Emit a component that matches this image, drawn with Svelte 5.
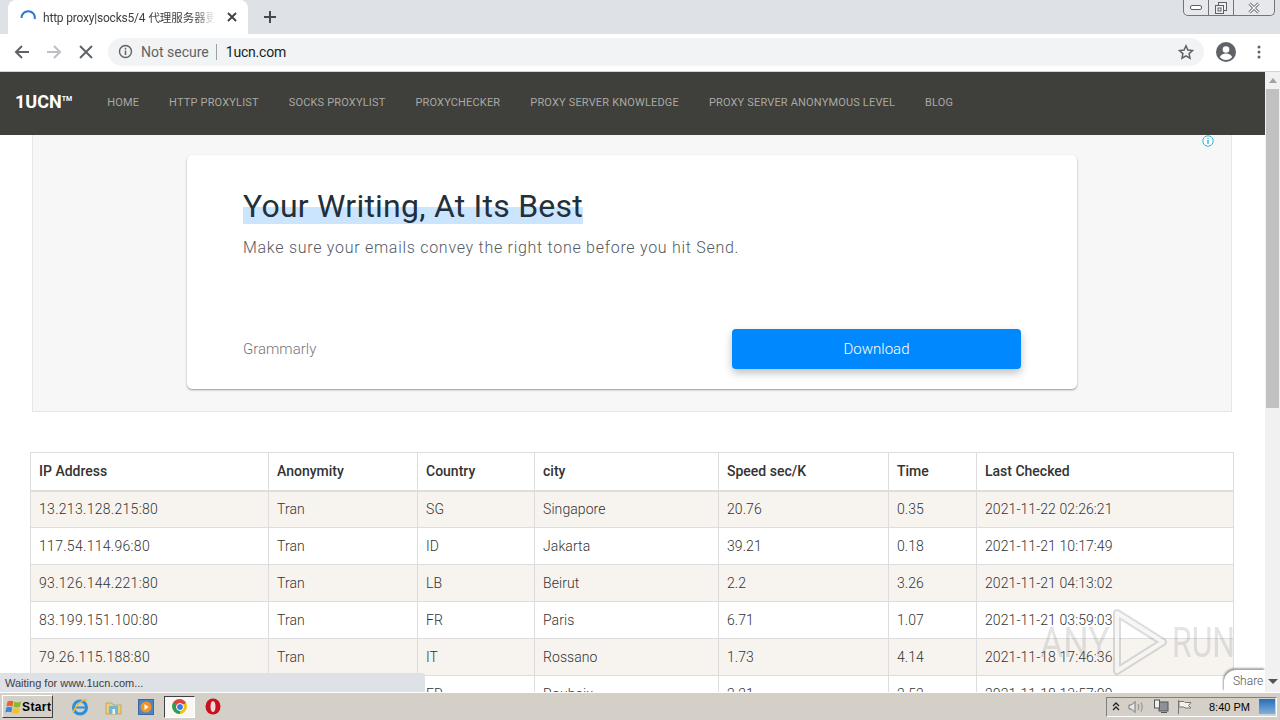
<script>
  const navItems = [
    "Home",
    "HTTP Proxylist",
    "SOCKS Proxylist",
    "ProxyChecker",
    "Proxy Server Knowledge",
    "Proxy Server Anonymous Level",
    "Blog",
  ];

  const rows = [
    ["13.213.128.215:80", "Tran", "SG", "Singapore", "20.76", "0.35", "2021-11-22 02:26:21"],
    ["117.54.114.96:80", "Tran", "ID", "Jakarta", "39.21", "0.18", "2021-11-21 10:17:49"],
    ["93.126.144.221:80", "Tran", "LB", "Beirut", "2.2", "3.26", "2021-11-21 04:13:02"],
    ["83.199.151.100:80", "Tran", "FR", "Paris", "6.71", "1.07", "2021-11-21 03:59:03"],
    ["79.26.115.188:80", "Tran", "IT", "Rossano", "1.73", "4.14", "2021-11-18 17:46:36"],
    ["90.63.218.232:80", "Tran", "FR", "Roubaix", "2.21", "2.52", "2021-11-18 13:57:09"],
  ];

  const headers = ["IP Address", "Anonymity", "Country", "city", "Speed sec/K", "Time", "Last Checked"];
</script>

<div class="screen">
  <header class="chrome">
    <div class="tabstrip">
      <div class="tab">
        <svg class="spinner" width="18" height="18" viewBox="0 0 18 18"><path d="M2.500 10A6.700 6.700 0 1 1 15.800 11" fill="none" stroke="#2a78d6" stroke-width="2"/></svg>
        <span class="tab-title"><span class="latin">http proxy|socks5/4</span> <span class="cjk">代理服务器更新</span></span>
        <svg class="tab-close" width="10" height="10" viewBox="0 0 10 10"><path d="M1 1l8 8M9 1l-8 8" stroke="#3c4043" stroke-width="1.800"/></svg>
      </div>
      <svg class="new-tab" width="14" height="14" viewBox="0 0 14 14"><path d="M7 1v12M1 7h12" stroke="#45484c" stroke-width="2"/></svg>
      <div class="win-buttons">
        <span class="win-btn"><svg width="14" height="8" viewBox="0 0 14 8"><rect x="1.500" y="1.500" width="11" height="4" rx="1.500" fill="#fff" stroke="#5c6168"/></svg></span>
        <span class="win-btn"><svg width="14" height="14" viewBox="0 0 14 14"><rect x="4.500" y="1.500" width="8" height="8" fill="#eef0f3" stroke="#5c6168"/><rect x="1.500" y="4.500" width="8" height="8" fill="#eef0f3" stroke="#5c6168"/><rect x="4" y="7" width="3" height="3" fill="none" stroke="#5c6168"/></svg></span>
        <span class="win-btn close"><svg width="14" height="12" viewBox="0 0 14 12"><path d="M2.500 1.500l9 9M11.500 1.500l-9 9" stroke="#5c6168" stroke-width="3"/><path d="M2.500 1.500l9 9M11.500 1.500l-9 9" stroke="#fff" stroke-width="1.200"/></svg></span>
      </div>
    </div>
    <div class="toolbar">
      <svg class="tool" width="16" height="16" viewBox="0 0 16 16"><path d="M15 8H2.500M8 2L2 8l6 6" fill="none" stroke="#5f6368" stroke-width="2"/></svg>
      <svg class="tool" width="16" height="16" viewBox="0 0 16 16"><path d="M1 8h12.500M8 2l6 6-6 6" fill="none" stroke="#bdc1c6" stroke-width="2"/></svg>
      <svg class="tool stop" width="14" height="14" viewBox="0 0 14 14"><path d="M1 1l12 12M13 1L1 13" stroke="#5f6368" stroke-width="2"/></svg>
      <div class="omnibox">
        <svg width="15" height="15" viewBox="0 0 15 15"><circle cx="7.500" cy="7.500" r="6" fill="none" stroke="#5f6368" stroke-width="1.400"/><path d="M7.500 6.500v4.500M7.500 3.800v1.600" stroke="#5f6368" stroke-width="1.500"/></svg>
        <span class="not-secure">Not secure</span>
        <span class="divider"></span>
        <span class="url">1ucn.com</span>
        <svg class="star" width="16" height="16" viewBox="0 0 16 16"><path d="M8 1.800l1.900 4.200 4.600.5-3.400 3.100.9 4.600L8 11.900l-4 2.300.9-4.600L1.500 6.500l4.600-.5z" fill="none" stroke="#5f6368" stroke-width="1.500"/></svg>
      </div>
      <svg class="avatar" width="20" height="20" viewBox="0 0 20 20"><circle cx="10" cy="10" r="10" fill="#5f6368"/><circle cx="10" cy="7.500" r="3.300" fill="#fff"/><path d="M3.800 15c1.500-2.600 3.800-3.400 6.200-3.400s4.700.8 6.200 3.400c-1.500 1.800-3.700 3-6.200 3s-4.700-1.200-6.200-3z" fill="#fff"/></svg>
      <svg class="menu" width="4" height="14" viewBox="0 0 4 14"><circle cx="2" cy="2" r="1.500" fill="#5f6368"/><circle cx="2" cy="7" r="1.500" fill="#5f6368"/><circle cx="2" cy="12" r="1.500" fill="#5f6368"/></svg>
    </div>
  </header>

  <div class="viewport">
    <main class="page">
      <nav class="navbar">
        <span class="brand">1UCN<sup>TM</sup></span>
        {#each navItems as item}
          <span class="nav-link">{item}</span>
        {/each}
      </nav>

      <section class="ad">
        <svg class="ad-info" width="12" height="12" viewBox="0 0 12 12"><circle cx="6" cy="6" r="5.200" fill="#fff" stroke="#2bb8d4"/><path d="M6 5v4M6 2.800v1.200" stroke="#2bb8d4" stroke-width="1.400"/></svg>
        <div class="ad-card">
          <h1><span>Your Writing, At Its Best</span></h1>
          <p>Make sure your emails convey the right tone before you hit Send.</p>
          <div class="ad-foot">
            <span class="advertiser">Grammarly</span>
            <span class="download">Download</span>
          </div>
        </div>
      </section>

      <table>
        <colgroup>
          <col style="width:238px" /><col style="width:149px" /><col style="width:117px" /><col style="width:184px" /><col style="width:170px" /><col style="width:88px" /><col />
        </colgroup>
        <thead>
          <tr>
            {#each headers as h}<th>{h}</th>{/each}
          </tr>
        </thead>
        <tbody>
          {#each rows as row}
            <tr>
              {#each row as cell}<td>{cell}</td>{/each}
            </tr>
          {/each}
        </tbody>
      </table>

      <div class="status">Waiting for www.1ucn.com...</div>
      <div class="watermark">
        <span class="mark-any">ANY</span>
        <svg width="56" height="68" viewBox="0 0 56 68">
          <path d="M5 5l46 29L5 63z" fill="none" stroke="#8e8e8e" stroke-opacity=".3" stroke-width="8" stroke-linejoin="round"/>
          <path d="M5 5l46 29L5 63z" fill="none" stroke="#fff" stroke-opacity=".75" stroke-width="4" stroke-linejoin="round"/>
        </svg>
        <span class="mark-run">RUN</span>
      </div>
    </main>
    <aside class="scrollbar">
      <i class="arrow"></i>
      <div class="thumb"></div>
    </aside>
    <div class="share"><span class="share-tab">Share</span><i></i></div>
  </div>

  <footer class="taskbar">
    <div class="start">
      <svg width="17" height="16" viewBox="0 0 17 16"><path d="M2.500 2.500C4.500 1.500 6.500 1.500 8.500 2.500L7.500 7.500C5.500 6.500 3.500 6.500 1.500 7.500z" fill="#e8632a"/><path d="M9.500 2.800C11.500 3.800 13.500 3.800 16 2.500L15 7.800C13 8.800 10.500 8.800 8.500 7.800z" fill="#86b92f"/><path d="M1.300 8.500C3.300 7.500 5.300 7.500 7.300 8.500L6.300 13.500C4.300 12.500 2.300 12.500.3 13.500z" fill="#3b86d8"/><path d="M8.300 8.800C10.300 9.800 12.800 9.800 14.800 8.800L13.800 14C11.800 15 9.300 15 7.300 14z" fill="#f2c12e"/></svg>
      <span>Start</span>
    </div>
    <div class="quick">
      <svg width="18" height="18" viewBox="0 0 18 18"><circle cx="9" cy="9.500" r="6.500" fill="none" stroke="#2b8ed8" stroke-width="3"/><path d="M4 9.500h10" stroke="#2b8ed8" stroke-width="2"/><path d="M2 15C5 6 12 1 16 2" fill="none" stroke="#f0b93a" stroke-width="1.500"/></svg>
      <svg width="17" height="16" viewBox="0 0 17 16"><path d="M1 4h6l1 2h8v9H1z" fill="#e9cf7c" stroke="#b79a45" stroke-width=".7"/><rect x="4" y="7" width="9" height="8" fill="#6fb6dc"/><rect x="7.500" y="10" width="2.500" height="5" fill="#eef4ea"/></svg>
      <svg width="16" height="16" viewBox="0 0 16 16"><rect x=".5" y=".5" width="15" height="15" fill="#4e86c4" stroke="#38689f"/><circle cx="8" cy="8" r="5.500" fill="#f0932a"/><path d="M6.500 5l4 3-4 3z" fill="#fff"/></svg>
      <span class="active-app"><span class="chrome-logo"><span></span></span></span>
      <svg width="16" height="17" viewBox="0 0 16 17"><ellipse cx="8" cy="8.500" rx="7.500" ry="8" fill="#c7111e"/><ellipse cx="8" cy="8.500" rx="2.500" ry="5.500" fill="#f3d6d6"/></svg>
    </div>
    <div class="tray">
      <svg width="8" height="9" viewBox="0 0 8 9"><path d="M1 4l3-3 3 3M1 8l3-3 3 3" fill="none" stroke="#222" stroke-width="1.300"/></svg>
      <svg width="17" height="14" viewBox="0 0 17 14"><path d="M1 5h2.500L7 1.500v11L3.500 9H1z" fill="#e8e8e4" stroke="#777"/><path d="M10 4c1 2 1 4 0 6M13 2.500c1.500 3 1.500 6 0 9" fill="none" stroke="#888"/></svg>
      <svg width="16" height="15" viewBox="0 0 16 15"><rect x="6" y="3" width="9" height="9" fill="#8d9196" stroke="#555"/><rect x="1.500" y="1" width="5" height="8" fill="#eee" stroke="#555"/><path d="M8 13.500h6" stroke="#555"/></svg>
      <svg width="15" height="14" viewBox="0 0 15 14"><path d="M1.500 0v14" stroke="#777"/><path d="M2 1.500h5l1 1h6l-2.500 3 2.500 2.500H8l-1-1H2z" fill="#f3f2ec" stroke="#777"/></svg>
      <span class="clock">8:40 PM</span>
      <span class="show-desktop"></span>
    </div>
  </footer>
</div>

<style>
  :global(body) {
    overflow: hidden;
    background: #fff;
  }
  .screen {
    width: 1280px;
    height: 720px;
    display: flex;
    flex-direction: column;
    overflow: hidden;
    font-family: Roboto, "Noto Sans CJK SC", sans-serif;
  }

  /* browser frame */
  .chrome {
    flex: none;
    height: 72px;
    background: #fff;
    border-bottom: 1px solid #d4d5d7;
    box-sizing: border-box;
  }
  .tabstrip {
    height: 34px;
    background: #dee1e6;
    display: flex;
    align-items: flex-end;
    padding-left: 8px;
    position: relative;
  }
  .tab {
    width: 240px;
    height: 34px;
    box-sizing: border-box;
    background: #fff;
    border-radius: 8px 8px 0 0;
    display: flex;
    align-items: center;
    padding: 0 10px 0 11px;
    gap: 6px;
  }
  .tab-title {
    flex: 1;
    font-size: 12px;
    color: #3c4043;
    white-space: nowrap;
    overflow: hidden;
    mask-image: linear-gradient(90deg, #000 88%, transparent);
  }
  .latin {
    letter-spacing: -0.2px;
  }
  .cjk {
    font-size: 11.500px;
  }
  .tab-close {
    margin: 0 1px 0 6px;
  }
  .new-tab {
    align-self: center;
    margin-left: 15px;
  }
  .win-buttons {
    position: absolute;
    top: 0;
    left: 1183px;
    width: 92px;
    height: 16px;
    display: grid;
    grid-template-columns: 25px 25px 1fr;
    box-sizing: border-box;
    border: 1px solid #70757c;
    border-top: none;
    border-radius: 0 0 5px 5px;
    background: #e6e8ec;
  }
  .win-btn {
    display: flex;
    align-items: center;
    justify-content: center;
    border-right: 1px solid #70757c;
  }
  .win-btn.close {
    border-right: none;
  }
  .toolbar {
    height: 37px;
    box-sizing: border-box;
    padding: 0 14px 2px;
    display: flex;
    align-items: center;
    gap: 16px;
  }
  .stop {
    margin-left: 1px;
  }
  .omnibox {
    width: 1096px;
    height: 28px;
    margin-left: -1px;
    box-sizing: border-box;
    background: #f1f3f4;
    border-radius: 14px;
    display: flex;
    align-items: center;
    padding: 0 10px;
    font-size: 14px;
  }
  .not-secure {
    margin-left: 8px;
    color: #5f6368;
  }
  .divider {
    width: 1px;
    height: 16px;
    background: #9aa0a6;
    margin: 0 9px 0 7px;
  }
  .url {
    flex: 1;
    color: #202124;
    letter-spacing: -0.2px;
  }
  .avatar {
    margin-left: -4px;
  }
  .menu {
    margin-left: 5px;
  }

  .viewport {
    flex: 1;
    min-height: 0;
    display: flex;
    position: relative;
  }
  .page {
    flex: 1;
    min-width: 0;
    position: relative;
    overflow: hidden;
    background: #fff;
  }
  .scrollbar {
    flex: none;
    width: 15px;
    background: #f1f1f1;
    display: flex;
    flex-direction: column;
    align-items: center;
  }
  .arrow {
    margin-top: 6px;
    border: 4px solid transparent;
    border-top: none;
    border-bottom: 5px solid #a3a3a3;
  }
  .thumb {
    margin-top: 6px;
    width: 13px;
    height: 319px;
    background: #c1c1c1;
  }

  /* site */
  .navbar {
    height: 63px;
    box-sizing: border-box;
    padding: 0 0 2px 15px;
    background: #3f3f3b;
    display: flex;
    align-items: center;
    gap: 30px;
  }
  .brand {
    font-size: 18px;
    font-weight: 700;
    color: #fff;
    margin: 0 5px 2px 0;
  }
  .brand sup {
    font-size: 7px;
    vertical-align: 7px;
    line-height: 0;
  }
  .nav-link {
    font-size: 11px;
    color: #a9a9a5;
    text-transform: uppercase;
    letter-spacing: 0.17px;
  }
  .ad {
    position: relative;
    margin: 0 33px 0 32px;
    height: 277px;
    box-sizing: border-box;
    border: 1px solid #e6e6e6;
    border-top: none;
    background: #f7f7f7;
    padding: 20px 154px 0;
  }
  .ad-info {
    position: absolute;
    top: 0;
    right: 17px;
  }
  .ad-card {
    height: 234px;
    box-sizing: border-box;
    padding: 32px 56px 20px;
    background: #fff;
    border-radius: 5px;
    box-shadow: 0 1px 2px rgba(0, 0, 0, 0.4);
    display: flex;
    flex-direction: column;
  }
  h1 {
    margin: 0;
    font-size: 32px;
    font-weight: 400;
    line-height: 38px;
    color: #22303c;
    letter-spacing: 0.23px;
  }
  h1 span {
    background: linear-gradient(transparent 53%, #cbe5ff 53%, #cbe5ff 97%, transparent 97%);
    display: inline-block;
  }
  .ad-card p {
    margin: 12px 0 0;
    font-size: 16px;
    line-height: 22px;
    font-weight: 300;
    color: #555a5f;
    letter-spacing: 0.72px;
  }
  .ad-foot {
    margin-top: auto;
    display: flex;
    align-items: center;
    justify-content: space-between;
  }
  .advertiser {
    font-size: 15px;
    font-weight: 300;
    color: #777;
  }
  .download {
    width: 289px;
    height: 40px;
    display: flex;
    align-items: center;
    justify-content: center;
    background: #0088ff;
    border-radius: 4px;
    color: #fff;
    font-size: 15px;
    font-weight: 300;
    box-shadow: 0 4px 9px rgba(0, 0, 0, 0.25);
  }

  table {
    margin: 40px 0 0 30px;
    width: 1204px;
    border-collapse: collapse;
    table-layout: fixed;
    font-size: 14px;
    color: #4a4a4a;
  }
  th,
  td {
    border: 1px solid #ddd;
    padding: 0 8px;
    height: 37px;
    box-sizing: border-box;
    text-align: left;
    white-space: nowrap;
  }
  th {
    height: 38px;
    font-weight: 500;
    color: #333;
    border-bottom-width: 2px;
  }
  td {
    font-weight: 300;
    color: #333;
    letter-spacing: 0.08px;
  }
  td:first-child {
    letter-spacing: 0.3px;
  }
  tbody tr:nth-child(odd) {
    background: #f7f4f0;
  }

  /* overlays */
  .status {
    position: absolute;
    left: 0;
    bottom: 0;
    width: 425px;
    height: 19px;
    box-sizing: border-box;
    padding: 4px 5px 0;
    font-family: "Liberation Sans", sans-serif;
    font-size: 11px;
    color: #3c4043;
    background: #dee1e6;
    border-top-right-radius: 3px;
  }
  .share {
    position: absolute;
    right: 0;
    bottom: 0;
    display: flex;
    align-items: center;
    gap: 3px;
    width: 56px;
  }
  .share-tab {
    width: 41px;
    height: 22px;
    padding-left: 9px;
    box-sizing: border-box;
    background: #fff;
    border-radius: 12px 0 0 0;
    box-shadow: -1px -2px 2px rgba(0, 0, 0, 0.35);
    font-size: 12px;
    font-weight: 300;
    color: #555;
    line-height: 22px;
  }
  .share i {
    border: 5px solid transparent;
    border-top: 5px solid #555;
    border-bottom: none;
  }
  .watermark {
    position: absolute;
    left: 1040px;
    top: 536px;
    width: 192px;
    display: flex;
    align-items: center;
    justify-content: space-between;
    font-size: 42px;
    color: rgba(120, 120, 120, 0.2);
    pointer-events: none;
  }
  .mark-any {
    width: 72px;
    display: inline-block;
    transform: scaleX(0.85);
    transform-origin: left center;
    margin-right: -4px;
  }
  .mark-run {
    width: 60px;
    display: inline-block;
    transform: scaleX(0.76);
    transform-origin: left center;
  }

  /* windows taskbar */
  .taskbar {
    flex: none;
    height: 28px;
    background: #d4d0c8;
    border-top: 1px solid #fff;
    box-sizing: border-box;
    display: flex;
    align-items: center;
    font-family: "Liberation Sans", sans-serif;
  }
  .start {
    margin-left: 2px;
    width: 51px;
    height: 23px;
    box-sizing: border-box;
    display: flex;
    align-items: center;
    padding-left: 2px;
    font-size: 12px;
    font-weight: 700;
    letter-spacing: 0.4px;
    color: #000;
    background: #d4d0c8;
    border: 1px solid;
    border-color: #fff #404040 #404040 #fff;
  }
  .quick {
    margin-left: 18px;
    display: flex;
    align-items: center;
    gap: 16px;
  }
  .active-app {
    width: 31px;
    height: 22px;
    box-sizing: border-box;
    margin: 0 -6px;
    display: flex;
    align-items: center;
    justify-content: center;
    background: #f8f7f4;
    border: 1px solid;
    border-color: #404040 #fff #fff #404040;
  }
  .chrome-logo {
    width: 15px;
    height: 15px;
    border-radius: 50%;
    display: flex;
    align-items: center;
    justify-content: center;
    background: conic-gradient(from -60deg, #dc4437 0 120deg, #f4c20d 0 240deg, #2f9e4f 0);
  }
  .chrome-logo span {
    width: 6px;
    height: 6px;
    border-radius: 50%;
    background: #3b78e7;
    border: 1px solid #fff;
  }
  .tray {
    margin-left: auto;
    margin-right: 3px;
    width: 171px;
    height: 20px;
    box-sizing: border-box;
    border: 1px solid;
    border-color: #808080 #fff #fff #808080;
    display: flex;
    align-items: center;
    padding-left: 5px;
    gap: 8px;
    font-size: 11px;
    color: #000;
  }
  .clock {
    margin-left: 9px;
    white-space: nowrap;
  }
  .show-desktop {
    margin-left: auto;
    margin-right: 1px;
    width: 16px;
    height: 15px;
    background: linear-gradient(#2a6cb8, #7fb0dc);
  }
</style>
